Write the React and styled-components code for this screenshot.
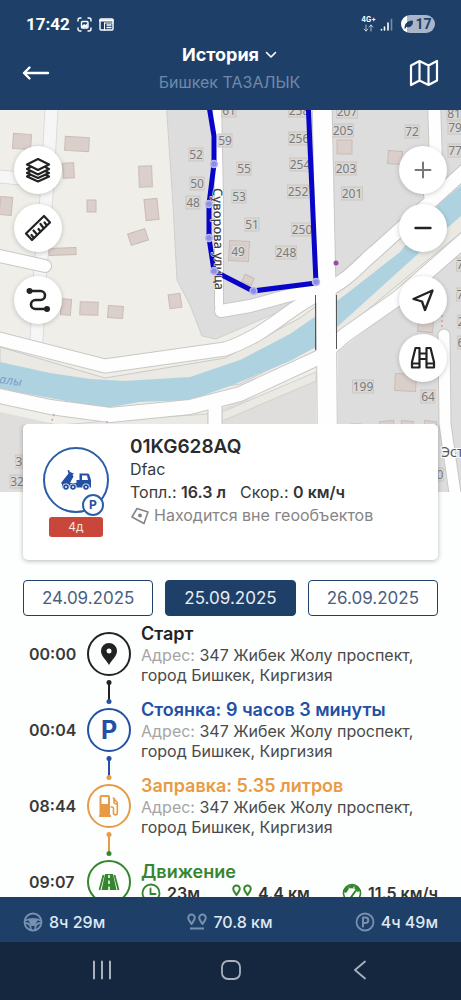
import React from "react";
import styled, { createGlobalStyle } from "styled-components";

const NAVY = "#1e4068";
const BLUE = "#2350a5";
const ORANGE = "#e89a45";
const GREEN = "#36862f";
const INK = "#222222";

const GlobalStyle = createGlobalStyle`
  *, *::before, *::after { box-sizing: border-box; }
  body { margin: 0; background: #fdfefe; }
  body, button { font-family: Inter, "Noto Sans", sans-serif; }
  button { padding: 0; cursor: pointer; }
  svg { display: block; flex: none; }
`;

const Screen = styled.div`
  display: flex;
  flex-direction: column;
  height: 100vh;
  overflow: hidden;
  color: #3a3a3a;
`;

const Header = styled.header`
  flex: none;
  background: ${NAVY};
  color: #fff;
`;

const StatusBar = styled.div`
  display: flex;
  align-items: center;
  justify-content: space-between;
  padding: 12px 26px 0;
  height: 36px;
`;

const StatusGroup = styled.div`
  display: flex;
  align-items: center;
  gap: ${(p) => p.$gap}px;
`;

const Clock = styled.time`
  font: 700 17px/24px Roboto, sans-serif;
`;

const Network = styled.div`
  display: flex;
  flex-direction: column;
  align-items: center;
  font: 700 7px/8px Inter, sans-serif;
`;

const Battery = styled.span`
  display: flex;
  align-items: center;
  justify-content: center;
  gap: 2px;
  width: 34px;
  height: 18px;
  margin-left: 4px;
  border-radius: 9px;
  background: linear-gradient(90deg, #fff 18%, #a9b6c9 18%);
  color: ${NAVY};
  font: 700 14px/18px Roboto, sans-serif;
`;

const TitleBar = styled.div`
  display: flex;
  align-items: center;
  justify-content: space-between;
  height: 74px;
  padding: 0 22px;
`;

const BareButton = styled.button`
  display: flex;
  border: 0;
  background: none;
  color: inherit;
`;

const Titles = styled.div`
  display: flex;
  flex-direction: column;
  align-items: center;
  gap: 2px;
  padding-bottom: 10px;
`;

const TitleButton = styled(BareButton)`
  align-items: center;
  gap: 6px;
  font-size: 18px;
  font-weight: 700;
  line-height: 26px;
`;

const Subtitle = styled.div`
  color: #7089aa;
  font-size: 16px;
  line-height: 24px;
`;

const MapArea = styled.section`
  position: relative;
  flex: none;
  height: 382px;
  overflow: hidden;
`;

const MapDrawing = styled.svg`
  width: 100%;
  height: 100%;
`;

const MapTools = styled.div`
  position: absolute;
  top: 36px;
  ${(p) => p.$side}: 14px;
  display: flex;
  flex-direction: column;
  gap: 10px;
`;

const MapButton = styled.button`
  display: flex;
  align-items: center;
  justify-content: center;
  width: 48px;
  height: 48px;
  margin-top: ${(p) => (p.$spaced ? 14 : 0)}px;
  border: 0;
  border-radius: 50%;
  background: #fff;
  color: ${(p) => (p.$muted ? "#777" : INK)};
  box-shadow: 0 1px 5px rgba(0, 0, 0, 0.2);
`;

const Sheet = styled.main`
  position: relative;
  flex: 1;
  min-height: 0;
  margin-top: -68px;
  padding: 0 23px;
  overflow: hidden;
`;

const VehicleCard = styled.article`
  display: flex;
  gap: 21px;
  height: 136px;
  padding: 12px 20px;
  border-radius: 5px;
  background: #fff;
  box-shadow: 0 1px 5px rgba(0, 0, 0, 0.28);
`;

const VehicleBadge = styled.div`
  display: flex;
  flex-direction: column;
  align-items: center;
  gap: 4px;
  padding-top: 11px;
`;

const VehicleCircle = styled.div`
  position: relative;
  display: flex;
  align-items: center;
  justify-content: center;
  width: 66px;
  height: 66px;
  border: 2px solid #2b5fa5;
  border-radius: 50%;
`;

const ParkedMark = styled.span`
  position: absolute;
  right: 3px;
  bottom: -5px;
  width: 22px;
  height: 22px;
  border: 2px solid #2b5fa5;
  border-radius: 50%;
  background: #fff;
  color: ${BLUE};
  font-size: 12px;
  font-weight: 700;
  line-height: 18px;
  text-align: center;
`;

const IdleTag = styled.span`
  width: 54px;
  height: 20px;
  border-radius: 3px;
  background: #c9463b;
  color: #fbe3df;
  font-size: 12px;
  line-height: 20px;
  text-align: center;
`;

const VehicleInfo = styled.div`
  display: flex;
  flex-direction: column;
  font-size: 16px;
  line-height: 23px;
  white-space: nowrap;
`;

const Plate = styled.h2`
  margin: 0;
  color: #2b2b2b;
  font-size: 19px;
  font-weight: 600;
  line-height: 22px;
`;

const Readings = styled.div`
  display: flex;
  gap: 14px;
`;

const Place = styled.div`
  display: flex;
  align-items: center;
  gap: 4px;
  color: #858585;
`;

const Dates = styled.div`
  display: flex;
  gap: 12px;
  margin-top: 20px;
`;

const DateButton = styled.button`
  flex: 1;
  height: 36px;
  border: 1px solid ${NAVY};
  border-radius: 4px;
  background: ${(p) => (p.$active ? NAVY : "#fff")};
  color: ${(p) => (p.$active ? "#e6edf5" : "#4a6080")};
  font-size: 17px;
`;

const Timeline = styled.ol`
  margin: 0;
  padding: 0 0 0 6px;
  list-style: none;
`;

const Event = styled.li`
  display: grid;
  grid-template-columns: 48px 44px 1fr;
  column-gap: 10px;
  align-items: center;
  height: 76px;
`;

const EventTime = styled.time`
  font-size: 16px;
  font-weight: 600;
`;

const Rail = styled.div`
  display: flex;
  flex-direction: column;
  align-items: center;
`;

const EventCircle = styled.div`
  display: flex;
  align-items: center;
  justify-content: center;
  width: 44px;
  height: 44px;
  border: 2px solid ${(p) => p.$color};
  border-radius: 50%;
  color: ${(p) => p.$color};
`;

const EventBody = styled.div`
  min-width: 0;
  font-size: 16px;
  line-height: 20px;
`;

const EventTitle = styled.h3`
  margin: 0;
  color: ${(p) => p.$color};
  font-size: 18px;
  font-weight: 600;
  line-height: 22px;
`;

const Address = styled.p`
  margin: 0;
  color: #4a4a4a;
`;

const AddressLabel = styled.span`
  color: #a5a5a5;
`;

const Stats = styled.div`
  display: flex;
  justify-content: space-between;
  color: ${GREEN};
`;

const Stat = styled.span`
  display: flex;
  align-items: center;
  gap: 6px;
`;

const StatValue = styled.b`
  color: #333;
  font-weight: 600;
`;

const Summary = styled.footer`
  position: relative;
  display: flex;
  flex: none;
  align-items: center;
  justify-content: space-between;
  height: 45px;
  padding: 4px 23px 0;
  background: ${NAVY};
  color: #7890b0;
  font-size: 16px;
`;

const SummaryValue = styled.span`
  color: #dfe9f4;
  font-weight: 500;
`;

const SystemNav = styled.nav`
  display: flex;
  flex: none;
  align-items: center;
  height: 58px;
  padding: 0 37px 2px;
  background: #15263f;
  color: #a9b2be;
`;

const NavButton = styled(BareButton)`
  flex: 1;
  justify-content: center;
`;

const Icon = ({ w, h, sw = 2, children }) => (
  <svg
    width={w}
    height={h}
    viewBox={`0 0 ${w} ${h}`}
    fill="none"
    stroke="currentColor"
    strokeWidth={sw}
    strokeLinecap="round"
    strokeLinejoin="round"
    aria-hidden="true"
  >
    {children}
  </svg>
);

const FrameIcon = () => (
  <Icon w={15} h={15} sw={1.4}>
    <path d="M1 4V3a2 2 0 0 1 2-2h1M11 1h1a2 2 0 0 1 2 2v1M14 11v1a2 2 0 0 1-2 2h-1M4 14H3a2 2 0 0 1-2-2v-1" />
    <rect x="4.500" y="4.500" width="6.500" height="6.500" rx="1" />
    <path d="M5 9l2-2 1.500 1L10.500 6v4.500H5z" fill="currentColor" stroke="none" />
  </Icon>
);
const NewsIcon = () => (
  <Icon w={15} h={13} sw={1.4}>
    <rect x="1" y="1" width="13" height="11" rx="1" />
    <path d="M1 2.500h13" strokeWidth="2" />
    <path d="M8 7h4M8 9.500h4" />
    <path d="M5.500 5v7M5.500 5H14" strokeWidth="1" />
  </Icon>
);
const DataArrows = () => (
  <Icon w={11} h={8} sw={1}>
    <path d="M3 1v6M1 5l2 2 2-2M8 7V1M6 3l2-2 2 2" opacity=".65" />
  </Icon>
);
const SignalIcon = () => (
  <Icon w={13} h={13} sw={1.6}>
    <path d="M1.500 11.500V12M4.500 9v3M8 5v7" />
    <path d="M11.500 1.500V12" opacity=".4" />
  </Icon>
);
const LeafIcon = () => (
  <Icon w={9} h={9} sw={1}>
    <path d="M1 8c0-5 3-7 7.500-7C9 5 6 8 2.500 6.500z" fill="currentColor" />
  </Icon>
);
const BackIcon = () => (
  <Icon w={28} h={16} sw={2.4}>
    <path d="M26 8H2M7.500 2.500L2 8l5.500 5.500" />
  </Icon>
);
const ChevronIcon = () => (
  <Icon w={12} h={8} sw={1.6}>
    <path d="M1.500 1.500L6 6l4.500-4.500" />
  </Icon>
);
const FoldedMapIcon = () => (
  <Icon w={30} h={28} sw={2.2}>
    <path d="M2 6.500l8.500-4.500 9 4.500L28 2v19.500L19.500 26l-9-4.500L2 26zM10.500 2v19.500M19.500 6.500V26" />
  </Icon>
);
const LayersIcon = () => (
  <Icon w={26} h={26} sw={2.2}>
    <path d="M13 2L24 7.500 13 13 2 7.500z" />
    <path d="M5 10.500l-3 1.500 11 5.500L24 12l-3-1.500" />
    <path d="M5 14.500L2 16l11 5 11-5-3-1.500" />
    <path d="M5 18l-3 1.500 11 5 11-5-3-1.500" />
  </Icon>
);
const RulerIcon = () => (
  <Icon w={28} h={28} sw={2.2}>
    <path d="M2 19.500L20 2l6 6.500L8 26z" />
    <path d="M9.500 23.500L7.500 21M13 20.500l-3.500-4M16.500 17.500l-2-2.500M19.500 14l-3-4M22.500 11l-2-2.500" />
  </Icon>
);
const RouteIcon = () => (
  <Icon w={26} h={26} sw={2.6}>
    <path d="M5 4h10.500a4.500 4.500 0 0 1 0 9h-5a4.500 4.500 0 0 0 0 9H21" />
    <circle cx="4.500" cy="4" r="1.700" fill="currentColor" />
    <circle cx="22" cy="22" r="1.700" fill="currentColor" />
  </Icon>
);
const PlusIcon = () => (
  <Icon w={18} h={18} sw={2}>
    <path d="M9 1.500v15M1.500 9h15" />
  </Icon>
);
const MinusIcon = () => (
  <Icon w={18} h={18} sw={2.4}>
    <path d="M1.500 9h15" />
  </Icon>
);
const LocateIcon = () => (
  <Icon w={24} h={24} sw={2.3}>
    <path d="M21.500 2.500L2.500 11l8.500 2.500 3 8.500z" />
  </Icon>
);
const BinocularsIcon = () => (
  <Icon w={26} h={26} sw={2.2}>
    <path d="M5.500 3h4v19.500H2V17L5.500 3zM20.500 3h-4v19.500H24V17L20.500 3zM9.500 8.500h7M9.500 14h7M2 18.500h7.500M16.500 18.500H24" />
  </Icon>
);
const TruckIcon = () => (
  <svg width="32" height="22" viewBox="0 0 32 22" fill={BLUE} aria-hidden="true">
    <path d="M1 14L8.500 4.500 7.500 1.500 9 1l1 2 4 1.500-1.500 1 1 2L10 14h6.500v-3h3V4.500h8a2 2 0 0 1 2 2L31 11v7.500H2V15z" />
    <path d="M22 6.500h5l1 4.500h-6z" fill="#fff" />
    {[6, 13, 26].map((x) => (
      <g key={x}>
        <circle cx={x} cy="18" r="3.600" fill="#fff" />
        <circle cx={x} cy="18" r="2.800" />
        <circle cx={x} cy="18" r="1" fill="#fff" />
      </g>
    ))}
  </svg>
);
const GeozoneIcon = () => (
  <Icon w={20} h={18} sw={1.6}>
    <path d="M7 1.500L18 5l-4 11.500L2 10z" />
    <circle cx="10" cy="8.500" r="2" fill="currentColor" stroke="none" />
  </Icon>
);
const PinIcon = () => (
  <svg width="18" height="24" viewBox="0 0 18 24" aria-hidden="true">
    <path
      d="M9 1a8 8 0 0 0-8 8c0 5.500 5.500 9 8 14 2.500-5 8-8.500 8-14a8 8 0 0 0-8-8zm0 5.500a2.500 2.500 0 1 1 0 5 2.500 2.500 0 0 1 0-5z"
      fill="currentColor"
    />
  </svg>
);
const ParkingLetter = styled.span`
  font-size: 25px;
  font-weight: 700;
`;
const FuelIcon = () => (
  <svg width="20" height="22" viewBox="0 0 20 22" aria-hidden="true">
    <path
      d="M2.500 0H9a2 2 0 0 1 2 2v18h1v2H0v-2h.500V2a2 2 0 0 1 2-2z"
      fill="currentColor"
    />
    <path d="M2.500 2H9v7H2.500z" fill="#fff" />
    <path
      d="M11.500 12h1.500c1 0 1.500.5 1.500 1.500V18a1.800 1.800 0 0 0 3.800 0V7.500L14 2.500M15 4.500V7c0 1 1.500 2 3.300 2"
      fill="none"
      stroke="currentColor"
      strokeWidth="1.600"
    />
  </svg>
);
const RoadIcon = () => (
  <svg width="22" height="18" viewBox="0 0 22 18" fill="currentColor" aria-hidden="true">
    <path d="M7 1h8l3.500 16h-15z" />
    <path d="M5.500 2L1.500 17M16.500 2l4 15" stroke="currentColor" strokeWidth="1.800" />
    <path d="M11 2v3M11 7.500V11M11 13.500V17" stroke="#fff" strokeWidth="1.500" />
  </svg>
);
const ClockIcon = () => (
  <Icon w={20} h={20} sw={1.8}>
    <circle cx="10" cy="10" r="8.500" />
    <path d="M9.500 5.500v5.500h5" />
  </Icon>
);
const PinsIcon = ({ line }) => (
  <Icon w={20} h={18} sw={2}>
    <path d="M4.500 11C3 8.500 1.200 7 1.200 4.800a3.300 3.300 0 0 1 6.600 0C7.800 7 6 8.500 4.500 11zM15.500 11c-1.500-2.500-3.300-4-3.300-6.200a3.300 3.300 0 0 1 6.600 0c0 2.200-1.800 3.700-3.300 6.200z" />
    {line && <path d="M4 15.500h12M4 15.200v.6M16 15.200v.6" />}
  </Icon>
);
const GaugeIcon = () => (
  <Icon w={20} h={20} sw={1.6}>
    <circle cx="10" cy="10" r="8.500" />
    <path d="M3.500 8A7 7 0 0 1 16 7" strokeWidth="3.500" />
    <path d="M8.500 15l5-7" strokeWidth="2" />
    <path d="M7 5l1 2M12 4v2" stroke="#fff" strokeWidth="1" />
  </Icon>
);
const WheelIcon = () => (
  <Icon w={20} h={20} sw={1.8}>
    <circle cx="10" cy="10" r="8.500" />
    <path d="M2 8.500c5-2 11-2 16 0M2.500 11c4 0 5.500 2.500 5.500 7M17.500 11c-4 0-5.500 2.500-5.500 7" />
    <path d="M6.500 8.500h7L11.500 13h-3z" fill="currentColor" />
  </Icon>
);
const ParkedIcon = () => (
  <Icon w={20} h={20} sw={1.8}>
    <circle cx="10" cy="10" r="8.500" />
    <path d="M8 14.500v-9h2.500a2.700 2.700 0 0 1 0 5.500H8" strokeWidth="2" />
  </Icon>
);

const Connector = ({ entering, color, from }) => (
  <svg width="6" height="16" viewBox="0 0 6 16" aria-hidden="true">
    {entering
      ? from && (
          <>
            <path d="M3 0v9" stroke={from} strokeWidth="2" />
            <circle cx="3" cy="9.500" r="2.500" fill={color} />
          </>
        )
      : (
          <>
            <path d="M3 6v10" stroke={color} strokeWidth="2" />
            <circle cx="3" cy="6.500" r="2.500" fill={color} />
          </>
        )}
  </svg>
);

const buildings = [
  [13, 134, 18, 15, 4], [65, 137, 24, 14, 3], [63, 163, 11, 15, -3], [0, 197, 12, 18, 5],
  [139, 166, 13, 21, -2], [87, 200, 9, 12, 0], [145, 199, 13, 21, -6], [129, 231, 18, 12, -18],
  [49, 248, 27, 7, -2], [61, 299, 10, 16, 4], [80, 302, 18, 13, 2], [108, 306, 15, 12, 4],
  [169, 294, 12, 14, -8], [229, 241, 20, 20, 3], [243, 276, 10, 8, 25], [337, 140, 15, 14, 0],
  [388, 151, 14, 13, 4], [395, 374, 21, 17, 3], [418, 321, 15, 11, 5], [380, 421, 14, 10, -5],
  [401, 421, 12, 10, 5], [351, 424, 10, 8, 0], [424, 421, 12, 10, 8],
];

const houseNumbers = [
  ["61", 229, 115], ["59", 225, 145], ["52", 196, 159], ["50", 197, 188], ["48", 193, 207],
  ["55", 244, 173], ["53", 239, 201], ["51", 252, 229], ["49", 238, 256], ["248", 286, 257],
  ["258", 299, 115], ["256", 299, 143], ["254", 300, 169], ["252", 298, 196], ["250", 302, 234],
  ["207", 347, 116], ["205", 343, 135], ["203", 346, 173], ["201", 352, 198], ["72", 412, 136],
  ["81", 454, 118], ["79", 455, 132], ["77", 455, 155], ["7", 460, 269], ["7", 460, 299],
  ["2", 461, 326], ["6", 461, 347], ["199", 363, 391], ["64", 428, 401], ["3", 19, 466],
  ["32", 17, 486], ["0", 440, 479],
];

const nodes = [
  [214, 164], [209, 204], [209, 238], [214, 271], [253.5, 291], [316, 282],
];

const roads = [
  { d: "M217 100L219 200L219 306", w: 8 },
  { d: "M221 311L250 306L316 288L326 284", w: 12 },
  { d: "M-5 338L105 366L225 349C270 334 290 306 320 294C350 280 362 262 375 252L470 166", w: 13 },
  { d: "M-5 395L50 407L110 415L190 407L240 394L320 357L345 335L398 298L470 235", w: 14 },
  { d: "M434 100L436 165L430 195", w: 12 },
  { d: "M444 335L445 424L456 500", w: 11 },
  { d: "M215 408V500", w: 13 },
  { d: "M322 100L326 290L328 500", w: 19 },
  { d: "M-5 255L45 266", w: 12 },
];

const MapPicture = () => (
  <MapDrawing viewBox="0 110 461 382" preserveAspectRatio="xMidYMid slice" role="img" aria-label="Карта маршрута">
    <rect x="-200" y="100" width="900" height="400" fill="#efeee9" />
    <path d="M166 100L173 205L177 280L190 305L202 336L216 339L260 320L316 296L357 258L470 158V100Z" fill="#dddddd" stroke="#cfcfcf" />
    <path d="M0 412L60 425L100 424L180 422L240 402L316 380V500H0Z" fill="#dfdedd" />
    <path d="M338 352L400 303L470 245V500H338Z" fill="#dddddd" />
    <path d="M0 347L105 378L225 358L300 318L370 266L470 176V225L336 336L240 384L110 406L0 386Z" fill="#eae9e3" stroke="#cbcac5" />
    <path d="M60 425L120 420L208 414V440H60ZM222 412L316 372V381L222 421Z" fill="#eae9e3" stroke="#d2d1cb" />
    <path
      d="M-5 361L50 373L90 379L125 381L190 377L240 360L290 334L316 316L345 295L400 252L440 203L470 178V208L430 243L336 328L316 347L290 361L230 386L190 400L140 402L105 408L50 398L-5 388Z"
      fill="#aed2e0"
    />
    <path d="M52 100L47 190L43 240L40 275L36 350M-5 176L25 179" fill="none" stroke="#dcdbdc" strokeWidth="14" />
    <path d="M52 100L47 190L43 240L40 275L36 350M-5 176L25 179" fill="none" stroke="#f6f6f7" strokeWidth="12" />
    <g fill="none" strokeLinecap="round" strokeLinejoin="round">
      {roads.map((r) => (
        <path key={r.d} d={r.d} stroke="#c9c8c6" strokeWidth={r.w + 2} />
      ))}
      {roads.map((r) => (
        <path key={r.d} d={r.d} stroke="#fefefe" strokeWidth={r.w} />
      ))}
    </g>
    <path d="M315.500 295V350M336.500 295V349" stroke="#555" strokeWidth="1" />
    <path d="M442 300V330M54 414L51 424M107 421V426" stroke="#e49a94" strokeWidth="1.500" strokeDasharray="2 3" />
    <g fill="#dacfca" stroke="#c9bcb5" strokeWidth="1">
      {buildings.map(([x, y, w, h, a]) => (
        <rect key={`${x}-${y}`} x={x} y={y} width={w} height={h} transform={`rotate(${a} ${x + w / 2} ${y + h / 2})`} />
      ))}
    </g>
    <g fontFamily="Noto Sans, sans-serif" fontSize="12" textAnchor="middle" fill="#7a7a7a">
      {houseNumbers.map(([n, x, y]) => (
        <g key={`${n}-${x}-${y}`}>
          <rect x={x - n.length * 3.5} y={y - 11} width={n.length * 7} height="13" fill="#dad7d4" stroke="#cdc6c1" strokeWidth="1" />
          <text x={x} y={y} stroke="#dcdbda" strokeWidth="2" paintOrder="stroke">{n}</text>
        </g>
      ))}
    </g>
    <text
      fontFamily="Noto Sans, sans-serif"
      fontSize="14"
      fill="#555"
      stroke="#fff"
      strokeWidth="2"
      paintOrder="stroke"
      x="441"
      y="457"
    >
      Эсто
    </text>
    <text fontFamily="Noto Sans, sans-serif" fontSize="12" fontStyle="italic" fill="#7a9fc9" transform="translate(-1 383) rotate(8)">алы</text>
    <circle cx="336" cy="263" r="2.500" fill="#9a4aa5" />
    <path d="M208 100L214 136V164L209 204V238L214 271L253 291L316 283L308 100" fill="none" stroke="#0805c8" strokeWidth="5" strokeLinejoin="round" />
    <text
      fontFamily="Noto Sans, sans-serif"
      fontSize="13"
      fontWeight="500"
      fill="#444"
      stroke="#fff"
      strokeWidth="1"
      paintOrder="stroke"
      transform="translate(213 188) rotate(89)"
    >
      Суворова улица
    </text>
    <g fill="#8f8ee6" stroke="#b9bbf0" strokeWidth="1.500">
      {nodes.map(([x, y]) => (
        <circle key={`${x}-${y}`} cx={x} cy={y} r="3.500" />
      ))}
    </g>
  </MapDrawing>
);

const ADDRESS = "347 Жибек Жолу проспект, город Бишкек, Киргизия";

const events = [
  { time: "00:00", title: "Старт", color: INK, icon: <PinIcon />, address: ADDRESS },
  { time: "00:04", title: "Стоянка: 9 часов 3 минуты", color: BLUE, icon: <ParkingLetter>P</ParkingLetter>, address: ADDRESS },
  { time: "08:44", title: "Заправка: 5.35 литров", color: ORANGE, icon: <FuelIcon />, address: ADDRESS },
  { time: "09:07", title: "Движение", color: GREEN, icon: <RoadIcon /> },
];

export default function App() {
  return (
    <Screen>
      <GlobalStyle />
      <Header>
        <StatusBar>
          <StatusGroup $gap={7}>
            <Clock>17:42</Clock>
            <FrameIcon />
            <NewsIcon />
          </StatusGroup>
          <StatusGroup $gap={4}>
            <Network>
              4G+
              <DataArrows />
            </Network>
            <SignalIcon />
            <Battery>
              <LeafIcon />
              17
            </Battery>
          </StatusGroup>
        </StatusBar>
        <TitleBar>
          <BareButton aria-label="Назад"><BackIcon /></BareButton>
          <Titles>
            <TitleButton>
              История
              <ChevronIcon />
            </TitleButton>
            <Subtitle>Бишкек ТАЗАЛЫК</Subtitle>
          </Titles>
          <BareButton aria-label="Карта"><FoldedMapIcon /></BareButton>
        </TitleBar>
      </Header>

      <MapArea>
        <MapPicture />
        <MapTools $side="left">
          <MapButton aria-label="Слои"><LayersIcon /></MapButton>
          <MapButton aria-label="Линейка"><RulerIcon /></MapButton>
          <MapButton $spaced aria-label="Маршрут"><RouteIcon /></MapButton>
        </MapTools>
        <MapTools $side="right">
          <MapButton $muted aria-label="Приблизить"><PlusIcon /></MapButton>
          <MapButton aria-label="Отдалить"><MinusIcon /></MapButton>
          <MapButton $spaced aria-label="Моё местоположение"><LocateIcon /></MapButton>
          <MapButton aria-label="Обзор"><BinocularsIcon /></MapButton>
        </MapTools>
      </MapArea>

      <Sheet>
        <VehicleCard>
          <VehicleBadge>
            <VehicleCircle>
              <TruckIcon />
              <ParkedMark>P</ParkedMark>
            </VehicleCircle>
            <IdleTag>4д</IdleTag>
          </VehicleBadge>
          <VehicleInfo>
            <Plate>01KG628AQ</Plate>
            <div>Dfac</div>
            <Readings>
              <span>Топл.: <StatValue>16.3 л</StatValue></span>
              <span>Скор.: <StatValue>0 км/ч</StatValue></span>
            </Readings>
            <Place>
              <GeozoneIcon />
              Находится вне геообъектов
            </Place>
          </VehicleInfo>
        </VehicleCard>

        <Dates>
          <DateButton>24.09.2025</DateButton>
          <DateButton $active aria-pressed="true">25.09.2025</DateButton>
          <DateButton>26.09.2025</DateButton>
        </Dates>

        <Timeline>
          {events.map((e, i) => (
            <Event key={e.time}>
              <EventTime>{e.time}</EventTime>
              <Rail>
                <Connector entering color={e.color} from={i > 0 && events[i - 1].color} />
                <EventCircle $color={e.color}>{e.icon}</EventCircle>
                <Connector color={e.color} />
              </Rail>
              <EventBody>
                <EventTitle $color={e.color}>{e.title}</EventTitle>
                {e.address ? (
                  <Address><AddressLabel>Адрес:</AddressLabel> {e.address}</Address>
                ) : (
                  <Stats>
                    <Stat><ClockIcon /><StatValue>23м</StatValue></Stat>
                    <Stat><PinsIcon /><StatValue>4.4 км</StatValue></Stat>
                    <Stat><GaugeIcon /><StatValue>11.5 км/ч</StatValue></Stat>
                  </Stats>
                )}
              </EventBody>
            </Event>
          ))}
        </Timeline>
      </Sheet>

      <Summary>
        <Stat><WheelIcon /><SummaryValue>8ч 29м</SummaryValue></Stat>
        <Stat><PinsIcon line /><SummaryValue>70.8 км</SummaryValue></Stat>
        <Stat><ParkedIcon /><SummaryValue>4ч 49м</SummaryValue></Stat>
      </Summary>
      <SystemNav>
        <NavButton aria-label="Последние приложения">
          <Icon w={20} h={20} sw={2}><path d="M2 1.500v17M10 1.500v17M18 1.500v17" /></Icon>
        </NavButton>
        <NavButton aria-label="Домой">
          <Icon w={20} h={20} sw={1.8}><rect x="1" y="1" width="18" height="18" rx="6" /></Icon>
        </NavButton>
        <NavButton aria-label="Назад в системе">
          <Icon w={14} h={20} sw={1.8}><path d="M12 1.500L2 10l10 8.500" /></Icon>
        </NavButton>
      </SystemNav>
    </Screen>
  );
}
